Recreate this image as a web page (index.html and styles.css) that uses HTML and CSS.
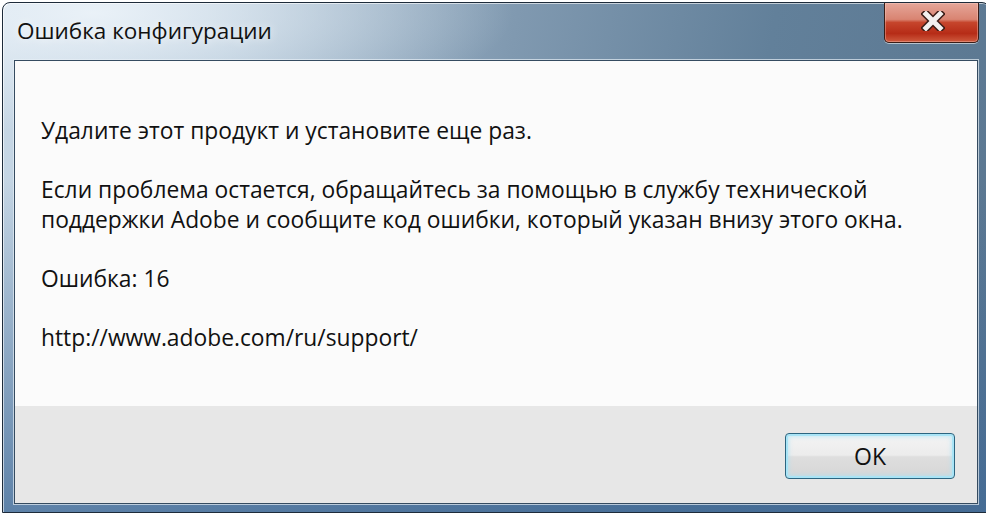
FILE: index.html
```html
<!DOCTYPE html>
<html>
<head>
    <meta charset="utf-8">
    <link rel="stylesheet" href="styles.css">
</head>
<body>
    <div class="window">
        <div class="titlebar">
            <span class="title">Ошибка конфигурации</span>
            <button class="close-btn">
                <svg width="24" height="20" viewBox="0 0 24 20">
                    <path d="M5 3 L19 17 M19 3 L5 17" stroke="#3c1d17" stroke-width="8" stroke-linecap="square" fill="none"/>
                    <path d="M5 3 L19 17 M19 3 L5 17" stroke="#f2f0ef" stroke-width="5" stroke-linecap="square" fill="none"/>
                </svg>
            </button>
        </div>
        <div class="client">
            <div class="message">
                <p>Удалите этот продукт и установите еще раз.</p>
                <p>Если проблема остается, обращайтесь за помощью в службу технической<br>поддержки Adobe и сообщите код ошибки, который указан внизу этого окна.</p>
                <p>Ошибка: 16</p>
                <p>http://www.adobe.com/ru/support/</p>
            </div>
            <div class="footer">
                <button class="ok-btn">OK</button>
            </div>
        </div>
    </div>
</body>
</html>
```

FILE: styles.css
```css
html, body {
    margin: 0;
    height: 100%;
    overflow: hidden;
    background: #ffffff;
}

body {
    padding: 2px 0 0 2px;
    box-sizing: border-box;
}

.window {
    width: 988px;
    height: 511px;
    box-sizing: border-box;
    border: 1px solid #1d2b3a;
    border-radius: 8px 8px 0 0;
    padding: 0 11px 8px 11px;
    display: flex;
    flex-direction: column;
    background:
        radial-gradient(ellipse 420px 120px at 90px 10px, rgba(236, 243, 249, 0.95), rgba(236, 243, 249, 0) 100%),
        linear-gradient(to bottom, rgba(62, 104, 150, 0) 35%, rgba(62, 104, 150, 0.75) 100%),
        linear-gradient(100deg, #c9d9e7 0%, #aac0d3 22%, #8099b0 48%, #62809a 72%, #5a7690 100%);
    box-shadow: inset 1px 1px 0 rgba(255, 255, 255, 0.6);
}

.titlebar {
    height: 57px;
    display: flex;
    justify-content: space-between;
    align-items: flex-start;
}

.title {
    font-family: "Open Sans", "Noto Sans", sans-serif;
    font-size: 22.5px;
    color: #111;
    padding: 12px 0 0 3px;
    text-shadow: 0 0 10px rgba(255, 255, 255, 0.9);
}

.close-btn {
    width: 95px;
    height: 40px;
    margin-right: -1px;
    padding: 0;
    border: 1px solid #3a1c16;
    border-top: none;
    border-radius: 0 0 5px 5px;
    background: linear-gradient(to bottom, #e5a699 0%, #d98472 42%, #c6452c 50%, #b62c17 78%, #cf5a3e 100%);
    box-shadow: 0 1px 0 rgba(255, 255, 255, 0.55), inset 0 0 0 1px rgba(255, 220, 210, 0.35);
    display: flex;
    align-items: center;
    justify-content: center;
}

.close-btn svg {
    margin: 0 0 3px 3px;
}

.client {
    flex: 1;
    display: flex;
    flex-direction: column;
    border: 1px solid #354b60;
    box-shadow: 0 0 0 1px rgba(230, 238, 245, 0.7);
    background: #fbfbfb;
}

.message {
    flex: 1;
    padding: 55px 0 0 26px;
    font-family: "Open Sans", "Noto Sans", sans-serif;
    font-size: 22.8px;
    line-height: 30px;
    color: #111;
}

.message p {
    margin: 0 0 29px 0;
}

.footer {
    height: 97px;
    background: #e7e7e7;
    display: flex;
    justify-content: flex-end;
    align-items: flex-start;
    padding: 27px 22px 0 0;
    box-sizing: border-box;
}

.ok-btn {
    width: 170px;
    height: 46px;
    border: 1px solid #2c6580;
    border-radius: 4px;
    background: linear-gradient(to bottom, #f4f4f4 0%, #ececec 48%, #dedede 52%, #d6d6d6 100%);
    box-shadow: inset 0 0 0 2px #a9e4f6, inset 0 0 4px 3px rgba(169, 228, 246, 0.6);
    font-family: "Open Sans", "Noto Sans", sans-serif;
    font-size: 23px;
    color: #111;
    padding: 0;
}
```
